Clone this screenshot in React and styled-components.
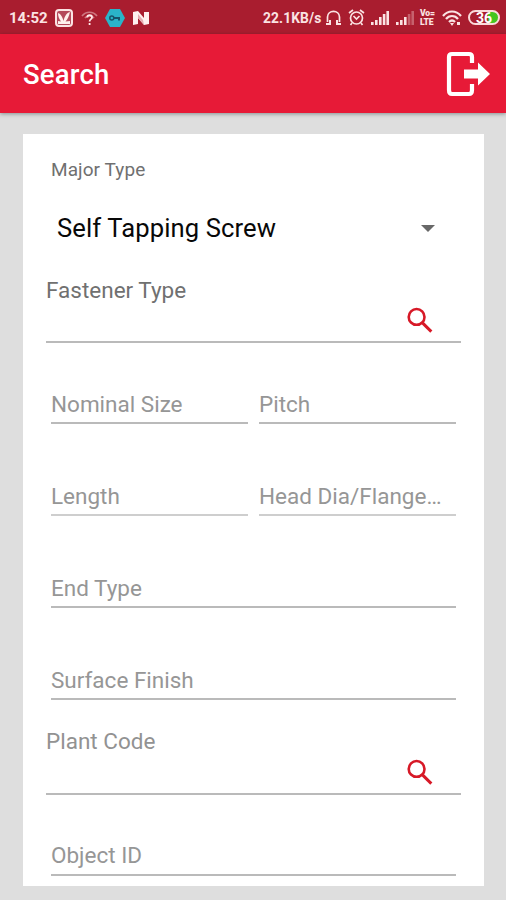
import React from "react";
import styled, { createGlobalStyle } from "styled-components";

const GlobalStyle = createGlobalStyle`
  * { box-sizing: border-box; }
  body { margin: 0; background: #dedede; font-family: Roboto, sans-serif; }
`;

const Screen = styled.div`
  width: 506px;
  height: 900px;
  overflow: hidden;
  display: flex;
  flex-direction: column;
  background: #dedede;
`;

const StatusBar = styled.header`
  height: 34px;
  flex: none;
  display: flex;
  align-items: center;
  justify-content: space-between;
  padding: 1px 6px 0 9px;
  background: #a91d2f;
  color: #fbe3e3;
`;

const StatusGroup = styled.div`
  display: flex;
  align-items: center;
`;

const StatusText = styled.span`
  width: ${(p) => p.$width}px;
  font-size: ${(p) => p.$size}px;
  font-weight: 700;
  line-height: 20px;
  letter-spacing: ${(p) => p.$spacing || 0}px;
  white-space: nowrap;
`;

const StatusIcon = styled.svg`
  display: block;
  flex: none;
  margin-left: ${(p) => p.$gap}px;
`;

const VolteMark = styled.span`
  width: 16px;
  margin-left: 6px;
  display: flex;
  flex-direction: column;
  font-size: 8.6px;
  font-weight: 900;
  line-height: 9px;
  letter-spacing: -0.2px;
`;

const Battery = styled.span`
  width: 32px;
  height: 15px;
  margin-left: 6px;
  border: 2px solid #fbdada;
  border-radius: 8px;
  background: linear-gradient(90deg, #a91d2f 0 18px, #43c520 18px);
  color: #fff;
  font-size: 14px;
  font-weight: 700;
  line-height: 12px;
  text-align: center;
`;

const AppBar = styled.div`
  height: 79px;
  flex: none;
  display: flex;
  align-items: center;
  justify-content: space-between;
  padding: 0 16px 0 23px;
  background: #e71a37;
  box-shadow: 0 1px 4px rgba(0, 30, 30, 0.4);
`;

const Title = styled.h1`
  margin: 2px 0 0;
  color: #fff;
  font-size: 27.5px;
  font-weight: 500;
  line-height: 36px;
  letter-spacing: 0.2px;
`;

const LogoutButton = styled.button`
  display: flex;
  padding: 0;
  border: 0;
  background: none;
`;

const Card = styled.main`
  width: 461px;
  height: 752px;
  flex: none;
  margin: 21px 0 0 23px;
  background: #fff;
`;

const SelectLabel = styled.div`
  height: 56px;
  padding: 23px 28px 0;
  color: #707070;
  font-size: 19px;
  line-height: 26px;
  letter-spacing: 0.08px;
`;

const Select = styled.div`
  height: 76px;
  display: flex;
  align-items: center;
  justify-content: space-between;
  padding: 0 49px 0 34px;
  color: #080808;
  font-size: 25.6px;
  line-height: 34px;
  letter-spacing: 0.1px;
`;

const LookupField = styled.div`
  height: ${(p) => p.$height}px;
  margin: 0 23px;
  padding-top: ${(p) => p.$labelTop}px;
  display: flex;
  flex-direction: column;
  justify-content: space-between;
  border-bottom: 2px solid #bababa;
  color: ${(p) => p.$color};
  font-size: 22.5px;
  line-height: 30px;
`;

const LookupIcon = styled.svg`
  display: block;
  flex: none;
  margin: -2px 28px 8px auto;
`;

const FieldRow = styled.div`
  height: ${(p) => p.$height}px;
  display: flex;
  align-items: flex-end;
  gap: 11px;
  margin: 0 28px;
`;

const Field = styled.div`
  flex: 1 1 0;
  min-width: 0;
  height: ${(p) => p.$height || 35}px;
  border-bottom: 2px solid ${(p) => p.$line || "#bababa"};
  color: #969696;
  font-size: 22.5px;
  line-height: 30px;
  white-space: nowrap;
`;

function SearchIcon() {
  return (
    <LookupIcon width="26" height="26" viewBox="0 0 26 26" fill="none" stroke="#d71927" strokeWidth="2.6">
      <circle cx="9.6" cy="9.9" r="7.9" />
      <path d="M15 15.4 24.3 24.6" strokeWidth="3" />
    </LookupIcon>
  );
}

function Signal({ gap, weak }) {
  return (
    <StatusIcon $gap={gap} width="18" height="14" viewBox="0 0 18 14" fill="currentColor">
      <path d="M0 11h2.6v3H0zM4 9h2.6v5H4zM8 6h2.6v8H8z" />
      <path d="M11.8 3h2.6v11h-2.6zM15.4 0H18v14h-2.6z" opacity={weak ? 0.35 : 1} />
    </StatusIcon>
  );
}

function Lookup({ label, height, labelTop, color }) {
  return (
    <LookupField $height={height} $labelTop={labelTop} $color={color}>
      <span>{label}</span>
      <SearchIcon />
    </LookupField>
  );
}

export default function App() {
  return (
    <Screen>
      <GlobalStyle />
      <StatusBar>
        <StatusGroup>
          <StatusText $width={38} $size={15}>14:52</StatusText>
          <StatusIcon $gap={8} width="18" height="18" viewBox="0 0 18 18">
            <rect x="1" y="1" width="16" height="16" rx="3" fill="#b4495a" stroke="#fbe3e3" strokeWidth="2" />
            <path d="M3 4c3 1 4.500 4 5.500 8C9.500 8 11 4 15 3c-1 4-2 7-4.500 9.500L15 12v3H3v-3l3 .5C4 10 3 7 3 4Z" fill="#fff0ed" />
          </StatusIcon>
          <StatusIcon $gap={8} width="17" height="16" viewBox="0 0 17 16" fill="none">
            <path d="M1 6C5 1 12 1 16 6M4 8C6 5 11 5 13 8" stroke="#ce7780" strokeWidth="1.7" />
            <path d="M6.300 7.500c0-3 4.700-3 4.700 0 0 1.700-2.400 1.700-2.400 4M8.600 13v2" stroke="#ffe8e8" strokeWidth="1.8" />
          </StatusIcon>
          <StatusIcon $gap={7} width="20" height="18" viewBox="0 0 20 18">
            <path d="M5 0h10l5 9-5 9H5L0 9Z" fill="#2ab4c9" />
            <path d="M8 8h7v3.500h-2V10H8Z" fill="#16546b" />
            <circle cx="6.800" cy="9" r="2" fill="none" stroke="#16546b" strokeWidth="1.5" />
          </StatusIcon>
          <StatusIcon $gap={8} width="17" height="14" viewBox="0 0 17 14">
            <path d="M0 14V1l5-1 6 7V1h5v12l-5 1-6-7v6Z" fill="#fff0ef" />
            <path d="m5 7 6 7-1-5-5-6Z" fill="#e5adb2" />
          </StatusIcon>
        </StatusGroup>
        <StatusGroup>
          <StatusText $width={58} $size={13.8} $spacing={0.1}>22.1KB/s</StatusText>
          <StatusIcon $gap={4} width="17" height="16" viewBox="0 0 17 16" fill="none" stroke="currentColor">
            <path d="M2.5 12V7c0-7.5 12-7.5 12 0v5" strokeWidth="1.7" />
            <path d="M1 14h4v-4M16 14h-4v-4" strokeWidth="2" />
          </StatusIcon>
          <StatusIcon $gap={6} width="17" height="17" viewBox="0 0 17 17" fill="none" stroke="currentColor" strokeWidth="1.7">
            <circle cx="8.5" cy="9" r="6" />
            <path d="m1 4 4-3M16 4l-4-3M5.5 7l3 3 3-3M4 14l-1.5 2M13 14l1.5 2" />
          </StatusIcon>
          <Signal gap={6} />
          <Signal gap={7} weak />
          <VolteMark><span>Vo=</span><span>LTE</span></VolteMark>
          <StatusIcon $gap={6} width="20" height="16" viewBox="0 0 20 16" fill="none" stroke="currentColor" strokeWidth="2.2">
            <path d="M1 6C6 0 14 0 19 6M4 9c3-4 9-4 12 0M7 12c2-2 4-2 6 0" />
            <path d="M8 13h4l-2 3ZM15 12h3v3h-3Z" fill="currentColor" stroke="none" />
          </StatusIcon>
          <Battery>36</Battery>
        </StatusGroup>
      </StatusBar>
      <AppBar>
        <Title>Search</Title>
        <LogoutButton aria-label="Log out">
          <svg width="45" height="46" viewBox="0 0 45 46" fill="none">
            <path d="M27 12V6q0-3-3-3H7Q4 3 4 6v33q0 4 3 4h17q3 0 3-4v-6" stroke="#fff" strokeWidth="4.2" />
            <path d="M19 18.5h14v-7L45 23 33 34.5v-7H19Z" fill="#fff" />
          </svg>
        </LogoutButton>
      </AppBar>
      <Card>
        <SelectLabel>Major Type</SelectLabel>
        <Select>
          Self Tapping Screw
          <svg width="14" height="7" viewBox="0 0 14 7"><path d="M0 0h14L7 7Z" fill="#686868" /></svg>
        </Select>
        <Lookup label="Fastener Type" height={77} labelTop={9} color="#707070" />
        <FieldRow $height={81}>
          <Field>Nominal Size</Field>
          <Field>Pitch</Field>
        </FieldRow>
        <FieldRow $height={92}>
          <Field $line="#cecece">Length</Field>
          <Field $line="#cecece">Head Dia/Flange…</Field>
        </FieldRow>
        <FieldRow $height={92}>
          <Field>End Type</Field>
        </FieldRow>
        <FieldRow $height={92}>
          <Field>Surface Finish</Field>
        </FieldRow>
        <Lookup label="Plant Code" height={95} labelTop={26} color="#929292" />
        <FieldRow $height={81}>
          <Field $height={36}>Object ID</Field>
        </FieldRow>
      </Card>
    </Screen>
  );
}
